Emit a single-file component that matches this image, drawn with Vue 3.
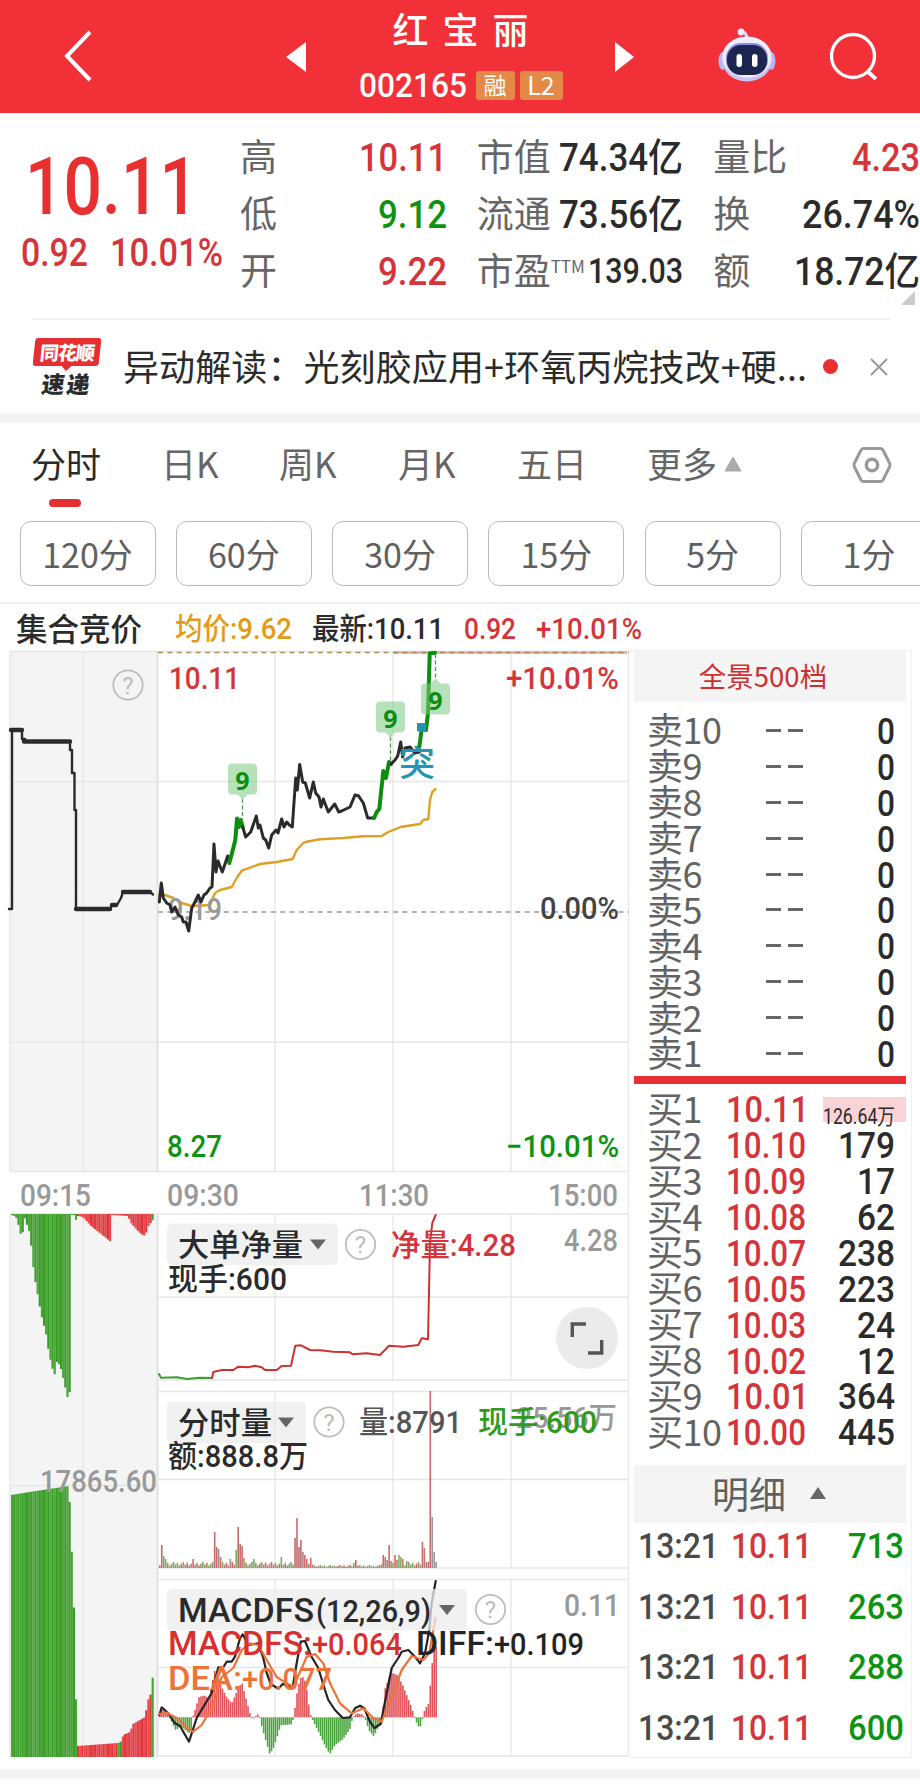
<!-- src/views/StockDetail.vue -->
<template>
  <div class="page">
    <header class="top-bar">
      <svg class="back" width="30" height="54" viewBox="0 0 30 54">
        <path d="M27 3 L4 27 L27 51" fill="none" stroke="#fff" stroke-width="4" />
      </svg>
      <svg width="20" height="30" viewBox="0 0 20 30"><path d="M0 15 L20 0 V30 Z" fill="#fff" /></svg>
      <div class="title">
        <h1>红宝丽</h1>
        <div class="code">
          <Fit t="002165" :w="108" :size="34" :weight="500" />
          <span class="badge">融</span>
          <span class="badge l2">L2</span>
        </div>
      </div>
      <svg width="20" height="30" viewBox="0 0 20 30"><path d="M19 15 L0 0 V30 Z" fill="#fff" /></svg>
      <svg class="robot" width="58" height="54" viewBox="0 0 58 54">
        <path d="M29 12 Q29 4 24 4" fill="none" stroke="#d9d3f5" stroke-width="3" />
        <circle cx="23" cy="4" r="3.4" fill="#f3efff" />
        <ellipse cx="4.5" cy="33" rx="4" ry="9" fill="#b9b4ef" />
        <ellipse cx="53.5" cy="33" rx="4" ry="9" fill="#b9b4ef" />
        <ellipse cx="29" cy="31" rx="25.5" ry="22.5" fill="#c9c3f3" />
        <ellipse cx="29" cy="29" rx="24.5" ry="20.5" fill="#f0edfd" />
        <rect x="8" y="15" width="42" height="32" rx="15" fill="#8b8de0" />
        <rect x="9" y="17" width="40" height="30" rx="14" fill="#1c2450" />
        <rect x="18.500" y="26" width="5.500" height="13" rx="2.700" fill="#fff" />
        <rect x="34" y="26" width="5.500" height="13" rx="2.700" fill="#fff" />
      </svg>
      <svg class="search" width="50" height="50" viewBox="0 0 50 50">
        <circle cx="23" cy="24" r="21.500" fill="none" stroke="#fff" stroke-width="3.300" />
        <path d="M37 39 L46 47" stroke="#fff" stroke-width="3.800" />
      </svg>
    </header>

    <section class="quote">
      <div class="price">
        <Fit t="10.11" :w="173" :size="79" :weight="500" />
        <div class="change">
          <Fit t="0.92" :w="67" :size="38" :weight="500" />
          <Fit t="10.01%" :w="113" :size="38" :weight="500" />
        </div>
      </div>
      <div v-for="(col, i) in quotes" :key="i" class="quote-col">
        <div v-for="q in col" :key="q.label" class="quote-row">
          <span class="quote-label">{{ q.label }}<sup v-if="q.sup">{{ q.sup }}</sup></span>
          <Fit :t="q.value" :w="q.w" :size="q.size || 39" :weight="500" :class="q.tone" />
        </div>
      </div>
      <i class="corner"></i>
    </section>

    <section class="news">
      <div class="news-logo">
        <span class="logo-top">同花顺</span>
        <span class="logo-bottom">速递</span>
      </div>
      <span class="news-text">异动解读：光刻胶应用+环氧丙烷技改+硬...</span>
      <i class="dot"></i>
      <svg width="18" height="18" viewBox="0 0 18 18">
        <path d="M1 1 L17 17 M17 1 L1 17" stroke="#999" stroke-width="2" />
      </svg>
    </section>

    <nav class="tabs">
      <span v-for="(tab, i) in tabs" :key="tab" class="tab" :class="{ active: i === 0 }">{{ tab }}</span>
      <svg class="more" width="18" height="16" viewBox="0 0 18 16"><path d="M9 1 L17 15 H1 Z" fill="#aaa" stroke="#aaa" stroke-linejoin="round" /></svg>
      <svg class="gear" width="40" height="38" viewBox="0 0 40 38">
        <path d="M12 2.500 H28 Q30 2.500 31 4 L37.500 17 Q38.500 19 37.500 21 L31 34 Q30 35.500 28 35.500 H12 Q10 35.500 9 34 L2.500 21 Q1.500 19 2.500 17 L9 4 Q10 2.500 12 2.500 Z" fill="none" stroke="#999" stroke-width="3" />
        <circle cx="20" cy="19" r="5.700" fill="none" stroke="#999" stroke-width="3.400" />
      </svg>
    </nav>
    <div class="periods">
      <button v-for="p in periods" :key="p">{{ p }}</button>
    </div>

    <div class="legend">
      <b>集合竞价</b>
      <Fit t="均价:9.62" :w="117" :size="30" :weight="500" class="avg" />
      <Fit t="最新:10.11" :w="132" :size="30" :weight="500" />
      <Fit t="0.92" :w="52" :size="30" :weight="500" class="up" />
      <Fit t="+10.01%" :w="106" :size="30" :weight="500" class="up" />
    </div>

    <main class="board">
      <svg class="charts" width="629" height="1108" viewBox="0 650 629 1108">
        <rect x="9.500" y="651" width="147.500" height="520" fill="#f4f4f4" />
        <rect x="9.500" y="1214" width="147.500" height="543" fill="#f4f4f4" />
        <!-- 网格线 -->
        <path :d="gridPath" fill="none" stroke="#e6e6e6" stroke-width="1.300" />
        <path d="M157.500 651 V1171 M157.500 1214 V1757" stroke="#e2e2e2" stroke-width="2" />
        <path d="M158 912 H629" stroke="#999" stroke-width="1.600" stroke-dasharray="5 4.400" />
        <path d="M393 652.500 H627" stroke="#f0b0b0" stroke-width="3" />
        <path d="M158 652.500 H629" stroke="#b29058" stroke-width="1.600" stroke-dasharray="5 4.400" />

        <!-- 集合竞价 -->
        <path d="M9 909 H12 V730 H22 V739 H25 V741.500 H70 V750 H72 V773 H74.500 V810 H76 V909 H110 L112 905 H117 L121 898 L123 892 H150 L153 894.500" class="line auction" />
        <path d="M11 730 H22 M24 741.500 H70 M76 909 H110 M123 892 H150 M112 905 H116" class="line auction-bold" />
        <rect v-for="(b, i) in auctionBars" :key="'a' + i" :x="b.x" :y="b.y" width="2.200" :height="b.h" :fill="b.fill" />

        <!-- 分时走势 -->
        <polyline :points="avgLine" class="line" stroke="#dda125" stroke-width="2.400" />
        <text x="168" y="920" textLength="54" lengthAdjust="spacingAndGlyphs" class="chart-text" font-size="31" fill="#999">9.19</text>
        <polyline v-for="(p, i) in priceLines" :key="'p' + i" :points="p.points" class="line" :stroke="p.color" :stroke-width="p.color === '#2b2b2b' ? 3 : 4" />
        <rect x="417" y="723" width="9" height="8.500" fill="#2394b4" />
        <g v-for="m in marks" :key="m.x">
          <path :d="m.dash" stroke="#4c9650" stroke-width="1.300" stroke-dasharray="4 2.500" />
          <path :d="m.tip" fill="#b5dfb7" />
          <rect :x="m.x - 14.5" :y="m.y" width="29" height="31" rx="4" fill="#7cc880" fill-opacity="0.55" />
          <text :x="m.x" :y="m.y + 26.500" text-anchor="middle" class="mark-text">9</text>
        </g>

        <!-- 大单净量 -->
        <polyline points="159,1374 161,1377.700 177,1377.300 187,1379 200,1377.700 212,1378" class="line" stroke="#3f9d32" stroke-width="2" />
        <polyline :points="netLine" class="line" stroke="#cf3030" stroke-width="2" />

        <!-- 分时量 -->
        <rect v-for="(b, i) in volumeBars" :key="'v' + i" :x="b.x" :y="1568 - b.h" width="1.600" :height="b.h" :fill="b.fill" />

        <!-- MACD -->
        <rect v-for="(b, i) in macdBars" :key="'m' + i" :x="b.x" :y="b.y" width="1.600" :height="b.h" :fill="b.fill" />
        <polyline :points="diffLine" class="line" stroke="#242424" stroke-width="2.200" />
        <polyline :points="deaLine" class="line" stroke="#ee7338" stroke-width="2.200" />

        <!-- 指标选择框 -->
        <g v-for="s in selectors" :key="s.t">
          <rect x="167" :y="s.y" :width="s.w" height="41.500" rx="5" fill="#ececec" fill-opacity="0.75" />
          <path :d="`M${s.w + 139} ${s.y + 16} h16 l-8 10 z`" fill="#666" />
        </g>

        <g v-for="c in helps" :key="c[0] + '-' + c[1]">
          <circle :cx="c[0]" :cy="c[1]" r="14.700" fill="none" stroke="#bdbdbd" stroke-width="1.800" />
          <text :x="c[0]" :y="c[1] + 8.500" text-anchor="middle" class="help-text">?</text>
        </g>
        <text
          v-for="(l, i) in labels"
          :key="'t' + i"
          :x="l[1]"
          :y="l[2]"
          :textLength="l[3]"
          :font-size="l[4]"
          :fill="l[5]"
          lengthAdjust="spacingAndGlyphs"
          class="chart-text"
        >{{ l[0] }}</text>

        <circle cx="587" cy="1338" r="31" fill="#ebebeb" />
        <path d="M572.300 1337 V1324 H586 M601.700 1340 V1353 H588" fill="none" stroke="#555" stroke-width="3.400" />
      </svg>

      <aside class="book">
        <div class="book-head">全景500档</div>
        <div class="levels sell">
          <div v-for="n in 10" :key="n" class="level">
            <span class="level-name">卖{{ 11 - n }}</span>
            <span class="dash"><i></i><i></i></span>
            <Fit t="0" :w="18" :size="36" :weight="500" />
          </div>
        </div>
        <div class="split"></div>
        <div class="levels buy">
          <div v-for="(b, i) in buys" :key="i" class="level" :class="{ first: i === 0 }">
            <span class="level-name">买{{ i + 1 }}</span>
            <Fit :t="b[0]" :w="b[0].endsWith('1') ? 83 : 80" :size="36" :weight="500" class="up buy-price" />
            <Fit :t="b[1]" :w="i ? b[1].length * 19 : 72" :size="i ? 36 : 22" :weight="i ? 500 : 400" />
          </div>
        </div>
        <div class="detail-head">
          明细
          <svg width="16" height="12" viewBox="0 0 16 12"><path d="M8 0 L16 12 H0 Z" fill="#666" /></svg>
        </div>
        <div class="details">
          <div v-for="v in trades" :key="v" class="trade">
            <Fit t="13:21" :w="81" :size="35" :weight="500" class="time" />
            <Fit t="10.11" :w="81" :size="35" :weight="500" class="up" />
            <Fit :t="v" :w="56" :size="35" :weight="500" class="down" />
          </div>
        </div>
      </aside>
    </main>
    <div class="bottom-band"></div>
  </div>
</template>

<script setup>
import { h } from 'vue'

// 窄体数字：按给定宽度压缩，盒子高度等于数字高度，方便对齐
const Fit = (props) => {
  const height = Math.round(props.size * 0.711)
  return h('svg', { class: 'fit', width: props.w, height }, [
    h('text', {
      x: 0,
      y: height,
      textLength: props.w,
      lengthAdjust: 'spacingAndGlyphs',
      'font-size': props.size,
      'font-weight': props.weight || 400,
      fill: 'currentColor'
    }, props.t)
  ])
}
Fit.props = ['t', 'w', 'size', 'weight']

const quotes = [
  [
    { label: '高', value: '10.11', w: 88, tone: 'up' },
    { label: '低', value: '9.12', w: 69, tone: 'down' },
    { label: '开', value: '9.22', w: 69, tone: 'up' }
  ],
  [
    { label: '市值', value: '74.34亿', w: 124 },
    { label: '流通', value: '73.56亿', w: 124 },
    { label: '市盈', sup: 'TTM', value: '139.03', w: 95, size: 35 }
  ],
  [
    { label: '量比', value: '4.23', w: 68, tone: 'up' },
    { label: '换', value: '26.74%', w: 118 },
    { label: '额', value: '18.72亿', w: 126 }
  ]
]
const tabs = ['分时', '日K', '周K', '月K', '五日', '更多']
const periods = ['120分', '60分', '30分', '15分', '5分', '1分']
const buys = [
  ['10.11', '126.64万'], ['10.10', '179'], ['10.09', '17'], ['10.08', '62'], ['10.07', '238'],
  ['10.05', '223'], ['10.03', '24'], ['10.02', '12'], ['10.01', '364'], ['10.00', '445']
]
const trades = ['713', '263', '288', '600']

const RED = '#d4343a'
const GREEN = '#0c9310'

const gridPath = [
  'M10 651.500 H629 M10 781.500 H629 M10 1042 H629 M10 1171.500 H629',
  'M10 651 V1171 M83 651 V1171 M275 651 V1171 M393 651 V1171 M511 651 V1171 M628.500 651 V1757',
  'M10 1214 H629 M158 1297 H629 M158 1380 H629 M158 1391.500 H629 M158 1479.500 H629 M158 1568 H629',
  'M158 1579.500 H629 M158 1667.500 H629 M158 1756 H629 M10 1485.500 H157 M10 1214 V1757 M83 1214 V1757',
  'M275 1214 V1380 M393 1214 V1380 M511 1214 V1380 M275 1391 V1568 M393 1391 V1568 M511 1391 V1568',
  'M275 1579 V1756 M393 1579 V1756 M511 1579 V1756'
].join(' ')

const priceLines = [
  { color: '#2b2b2b', points: '159.3,902 161.3,883 163.3,898 166.7,903 170,905 171.7,912 175,907 178.3,915 181.7,917 183.3,922 186,922 188.7,931 191.7,908 195,902 198.3,895 201,902 204,895 206.7,893 210,888 212,887 214,844 216,872 218,861 222.3,872 227.7,856 229.3,863' },
  { color: '#0c8f10', points: '229.3,863 233.3,848 235.3,840 237,818.5 238.7,827 240.7,820 242.7,827' },
  { color: '#2b2b2b', points: '242.7,827 245.7,837 250.7,832 256.3,816 258.3,828 260,825 263.3,838 265.7,840 268.7,848 271.7,835 276,830 278,833 281.7,819 284,827 286.7,822 289.3,825 292.3,827 295.7,778 297.3,790 299.7,764.5 302.7,782 305.3,783 309.7,798 313.3,782 315.7,793 319,797 321,807 323.3,799 328.3,812 334.7,804 338.7,812 341.7,811 350,807 355,795 358.3,795.7 363.3,803 367.7,818 374,818' },
  { color: '#0c8f10', points: '374,818 376.7,812 379.3,809 383.3,771 386,778 389,762 391,764' },
  { color: '#2b2b2b', points: '391,764 395,760 397.7,756 400.7,742 402.7,757 405,748 410,747 415,753 419.3,752' },
  { color: '#0c8f10', points: '419.3,747 421.7,729 426,730 428,713 429.7,653.5 435,652.7' }
]
const avgLine = '159.3,895 165,895 173.3,898 181.7,903 191.7,906 210,905 215,893 220,890 231.7,887 236.7,878 241.7,870.7 260,864 276.7,862 292.7,859 296.7,850 303.3,843 306.7,841.7 320,839.3 343.3,838 363.3,836.3 381.7,836 388.3,832 401.7,826.7 420,824 423.3,820 428.3,819 430,800 432.3,792 435.5,789'
const netLine = '212,1378 213.3,1372 221.7,1370 233.3,1370 238.3,1366.7 248.3,1367.3 255,1365.7 261.7,1367.3 265,1370 276.7,1370 281.7,1366 291,1365.7 295.3,1345.7 301,1345.3 310,1350 320,1350.3 333.3,1351.7 350,1352.3 352.3,1354.3 366.7,1353.3 380,1355 389,1345.7 403.3,1346.7 418.3,1345 421.7,1338.3 428,1339.3 430,1243 432.3,1223 435.7,1215'
const diffLine = '159.3,1715 161.7,1707.3 168.3,1713.3 175,1723.3 180,1726 189,1741.7 196.7,1718 211.7,1693 218.3,1667.3 223.3,1667.3 226.7,1661.7 231.7,1661.7 235,1656.7 240,1638.3 242.7,1634.3 248.3,1645 258.3,1643.3 263.3,1658 266.7,1673 270.7,1684 278.3,1688.7 282.7,1684 292.7,1687.3 296.7,1663 300.7,1641.7 305,1641 311.7,1657 318.3,1668 325,1690 328.3,1700 335,1710 342.7,1718 350,1717.3 355,1708.3 360,1705.7 364.3,1708.3 370,1721.7 374.3,1728 380.7,1724 386.7,1693 391.7,1668 398.3,1658 401.7,1651.7 408.3,1650 415,1656.7 420,1663.3 425,1653.3 429.3,1630 431.7,1603 435.7,1581'
const deaLine = '159.3,1714 166.7,1712.7 176.7,1718 186.7,1728 193.3,1731.7 201.7,1725 213.3,1705 218.3,1687 221.7,1677 233.3,1668 241.7,1650 250,1643.3 258.3,1645 266.7,1660 276.7,1677 286.7,1683.3 293.3,1686.7 300,1672 306.7,1656.7 315,1654 323.3,1663.3 330,1683.3 340,1703.3 351.7,1713.3 363.3,1708.3 373.3,1718 381.7,1721.7 391.7,1696.7 401.7,1670 411.7,1656 423.3,1660 429.3,1653 433.3,1630 435.7,1618'

const marks = [
  { x: 242.5, y: 763.5, dash: 'M242.500 799 V821', tip: 'M237.500 794.500 h10 l-5 5 z' },
  { x: 390.5, y: 701.500, dash: 'M390.500 737 V763', tip: 'M385.500 732.500 h10 l-5 5 z' },
  { x: 435.5, y: 683.500, dash: 'M435.500 654 V680', tip: 'M430.500 683.500 h10 l-5 -5 z' }
]
const selectors = [
  { t: '大单净量', y: 1223.5, w: 171 },
  { t: '分时量', y: 1401.5, w: 139 },
  { t: 'MACDFS', y: 1589, w: 300 }
]
const helps = [[128, 685], [360.5, 1244.5], [329, 1422], [490.5, 1609.5]]

// 文本, x, y, 宽度, 字号, 颜色
const labels = [
  ['10.11', 169, 689, 71, 32, RED],
  ['+10.01%', 506, 689, 113, 31, RED],
  ['0.00%', 540, 919, 79, 31, '#444'],
  ['8.27', 167, 1157, 55, 31, GREEN],
  ['−10.01%', 506, 1157, 113, 31, GREEN],
  ['突', 399, 776, 36, 35, '#2394b4'],
  ['09:15', 20, 1206, 71, 31, '#999'],
  ['09:30', 167, 1206, 72, 31, '#999'],
  ['11:30', 359, 1206, 70, 31, '#999'],
  ['15:00', 548, 1206, 70, 31, '#999'],
  ['大单净量', 178, 1256, 125, 31, '#2b2b2b'],
  ['净量:4.28', 391, 1256, 125, 31, RED],
  ['4.28', 564, 1251, 54, 31, '#999'],
  ['现手:600', 168, 1290, 119, 31, '#2b2b2b'],
  ['分时量', 178, 1434, 94, 31, '#2b2b2b'],
  ['25.56万', 516, 1428, 101, 30, '#999'],
  ['量:8791', 359, 1433, 103, 31, '#555'],
  ['现手:600', 478, 1433, 119, 31, '#2f9a1c'],
  ['额:888.8万', 168, 1467, 140, 31, '#2b2b2b'],
  ['17865.60', 40, 1492, 117, 31, '#999'],
  ['MACDFS', 178, 1622, 136, 33, '#2b2b2b'],
  ['(12,26,9)', 316, 1622, 115, 31, '#2b2b2b'],
  ['0.11', 564, 1616, 56, 31, '#999'],
  ['MACDFS:', 168, 1655, 144, 33, '#d9302f'],
  ['+0.064', 312, 1655, 90, 31, '#d9302f'],
  ['DIFF:', 416, 1655, 78, 33, '#242424'],
  ['+0.109', 494, 1655, 90, 31, '#242424'],
  ['DEA:', 168, 1690, 74, 33, '#ee7338'],
  ['+0.077', 242, 1690, 90, 31, '#ee7338']
]

// 在关键点之间线性插值
function envelope(points, x) {
  for (let i = 1; i < points.length; i++) {
    const [x0, y0] = points[i - 1]
    const [x1, y1] = points[i]
    if (x <= x1) return y0 + ((y1 - y0) * (x - x0)) / (x1 - x0 || 1)
  }
  return points[points.length - 1][1]
}

const macdShape = [
  [159, 3], [162, 10], [168, 3], [169, -1], [175, -13], [180, -9], [190, -17], [191.5, 0], [193, 3], [198, 20], [203, 22],
  [208, 19], [211, 33], [214, 47], [218, 38], [220, 32], [226, 20], [231, 14], [237, 28], [241, 35], [247, 12], [250, 1],
  [252, -1], [257, 3], [259, -1], [262, -13], [269, -37], [273, -30], [280, -8], [291, -7], [293, 0], [297, 30], [301, 42],
  [305, 35], [309, 5], [311, -1], [318, -15], [324, -28], [329, -37], [334, -28], [342, -22], [349, -12], [352, 0], [356, 4],
  [362, 3], [365, -3], [368, -13], [373, -19], [380, -5], [382, 0], [383, 25], [390, 45], [397, 42], [402, 32], [410, 12],
  [414, 0], [417, -9], [420, -9], [422, 0], [424, 8], [428, 14], [430, 38], [433, 72], [436, 70]
]
const macdBars = Array.from({ length: 142 }, (_, i) => {
  const x = 159 + i * 1.96
  const v = envelope(macdShape, x)
  return { x, y: v > 0 ? 1717.3 - v : 1717.3, h: Math.max(1, Math.abs(v)), fill: v > 0 ? '#e05358' : '#4ba53e' }
})

const peaks = {
  1: 23, 2: 12, 3: 9, 17: 9, 28: 36, 29: 21, 30: 19, 31: 11, 36: 9, 39: 18, 40: 41, 41: 24, 42: 22, 43: 10, 48: 9,
  62: 11, 69: 30, 70: 50, 71: 21, 72: 28, 73: 16, 74: 13, 75: 9, 77: 10, 99: 5, 100: 8, 114: 13, 115: 11, 116: 8, 117: 23, 118: 7,
  120: 13, 121: 8, 122: 13, 123: 11, 124: 9, 126: 7, 134: 26, 135: 20, 136: 6, 138: 177, 139: 51, 140: 16, 141: 6
}
const volumeColors = ['#dc6468', '#6cb45c', '#999088', '#c97870', '#8aa862']
const volumeBars = Array.from({ length: 142 }, (_, i) => {
  const calm = i > 78 && i < 113 ? 1.3 : 2.6
  const hgt = peaks[i] || calm + ((i * 7) % 5) * (calm / 3)
  let fill = hgt > 20 ? '#c56a6a' : volumeColors[(i * 3 + (i >> 2)) % 5]
  if (i > 138) fill = '#999'
  return { x: 159 + i * 1.96, h: hgt, fill }
})

const netShape = [
  [10, 1], [14, 2], [16, 5], [21, 26], [23, 2], [25, 8], [29, 20], [33, 60], [36, 77], [40, 100], [45, 120], [48, 140],
  [52, 157], [54, 161], [56, 146], [60, 155], [64, 172], [66, 184], [69, 177], [70, 1], [73, 1], [75, 6], [77, 2], [82, 3],
  [90, 12], [100, 20], [110, 28], [111, 1], [127, 2], [130, 9], [135, 15], [140, 20], [144, 22], [148, 10], [151, 8], [153, 2]
]
const unmatchedShape = [
  [10, 262], [35, 266], [68, 271], [69.5, 224], [72, 183], [74, 96], [76, 11], [117, 14], [121, 16], [122, 22], [129, 25],
  [132, 33], [144, 40], [147, 57], [151, 66], [152, 89], [155, 89]
]
const auctionBars = []
for (let x = 11; x < 153; x += 2.13) {
  const down = envelope(netShape, x)
  auctionBars.push({ x, y: 1214, h: down, fill: stripe(x, x < 76 || x > 151) })
  const up = envelope(unmatchedShape, x)
  auctionBars.push({ x, y: 1757 - up, h: up, fill: stripe(x, x < 75 || x > 151 || (x > 117 && x < 121)) })
}
function stripe(x, green) {
  const odd = Math.round(x / 2.13) % 2
  if (green) return odd ? '#48a832' : '#3b9a2c'
  return odd ? '#ee474b' : '#d9393e'
}
</script>

<style>
body {
  background: #fff;
}

.fit {
  display: block;
  flex: none;
  overflow: visible;
  font-family: Roboto, 'Noto Sans CJK SC', sans-serif;
}
</style>

<style scoped>
.page {
  width: 920px;
  height: 1792px;
  overflow: hidden;
  background: #fff;
  color: #2b2b2b;
  font-family: 'Noto Sans CJK SC', sans-serif;
}

.up {
  color: #d4343a;
}

.down {
  color: #0c9310;
}

.top-bar {
  display: grid;
  grid-template-columns: 286px 20px 309px 20px 141px 104px;
  align-items: center;
  height: 113px;
  background: #f23038;
  color: #fff;
}

.back {
  margin-left: 63px;
  margin-bottom: 2px;
}

.robot {
  justify-self: end;
  margin-bottom: 4px;
}

.search {
  justify-self: end;
}

.title {
  display: flex;
  flex-direction: column;
  align-items: center;
}

.title h1 {
  margin: -5px 0 0 14px;
  font-size: 36px;
  line-height: 52px;
  font-weight: 500;
  letter-spacing: 14px;
}

.code {
  display: flex;
  align-items: center;
  height: 42px;
  margin-top: 10px;
}

.badge {
  width: 39px;
  height: 29px;
  margin-left: 9px;
  border-radius: 3px;
  background: #e48a48;
  font-size: 23px;
  line-height: 27px;
  text-align: center;
}

.badge.l2 {
  width: 43px;
  margin-left: 5px;
  font-size: 25px;
}

.quote {
  position: relative;
  display: flex;
  gap: 30px;
  height: 191px;
  padding-top: 14px;
}

.price {
  width: 210px;
  padding-top: 31px;
  color: #e93030;
}

.price > svg {
  margin-left: 25px;
}

.change {
  display: flex;
  gap: 22px;
  margin: 25px 0 0 21px;
  color: #d4343a;
}

.quote-col {
  width: 207px;
}

.quote-row {
  display: flex;
  align-items: center;
  justify-content: space-between;
  height: 57px;
}

.quote-row > svg {
  margin-top: 2px;
}

.quote-label {
  color: #666;
  font-size: 37px;
  line-height: 57px;
  white-space: nowrap;
}

.quote-label sup {
  font-size: 17px;
  line-height: 0;
  vertical-align: 12px;
}

.corner {
  position: absolute;
  right: 5px;
  bottom: 13px;
  border-left: 14px solid transparent;
  border-bottom: 14px solid #ccc;
}

.news {
  display: flex;
  align-items: center;
  height: 93px;
  margin: 0 29px 0 32px;
  border-top: 2px solid #f2f2f2;
}

.news-logo {
  display: flex;
  flex-direction: column;
  align-items: center;
  width: 70px;
}

.logo-top {
  width: 66px;
  height: 28px;
  border-radius: 3px;
  background: #e62f33;
  color: #fff;
  font-size: 19px;
  font-weight: 900;
  line-height: 27px;
  letter-spacing: -1px;
  text-align: center;
  transform: skewX(-6deg);
}

.logo-top::after {
  content: '';
  position: absolute;
  left: 29px;
  top: 28px;
  border: 5px solid transparent;
  border-top-color: #e62f33;
  border-bottom: 0;
}

.logo-bottom {
  margin-top: 4px;
  font-size: 23px;
  font-weight: 900;
  line-height: 26px;
  letter-spacing: 2px;
  transform: skewX(-8deg);
}

.news-text {
  width: 699px;
  padding: 0 0 4px 21px;
  font-size: 36px;
  line-height: 50px;
  letter-spacing: 0.1px;
  white-space: nowrap;
  box-sizing: border-box;
}

.dot {
  width: 15px;
  height: 15px;
  margin: 0 32px 0 22px;
  border-radius: 50%;
  background: #e93030;
}

.tabs {
  display: flex;
  height: 98px;
  padding-left: 31px;
  border-top: 10px solid #f4f4f4;
}

.tab {
  position: relative;
  width: 119px;
  padding-left: 12px;
  color: #666;
  font-size: 35px;
  line-height: 80px;
  box-sizing: border-box;
  white-space: nowrap;
}

.tab:nth-child(1) {
  width: 118px;
  padding-left: 0;
}

.tab:nth-child(n + 3) {
  left: -1px;
}

.tab:nth-child(6) {
  width: 89px;
  padding-left: 23px;
}

.tab.active {
  color: #2b2b2b;
}

.tab.active::after {
  content: '';
  position: absolute;
  left: 18px;
  bottom: 14px;
  width: 32px;
  height: 8px;
  border-radius: 4px;
  background: #e62f33;
}

.more {
  margin: 33px 0 0 10px;
}

.gear {
  margin: 23px 0 0 110px;
}

.periods {
  display: flex;
  gap: 20.3px;
  height: 81px;
  padding-left: 19.5px;
  overflow: hidden;
  border-bottom: 2px solid #f0f0f0;
}

.periods button {
  flex: none;
  width: 136px;
  height: 65px;
  padding: 0;
  border: 1.5px solid #bbb;
  border-radius: 11px;
  background: #fff;
  color: #606060;
  font-family: inherit;
  font-size: 34px;
  line-height: 60px;
}

.legend {
  display: flex;
  align-items: center;
  height: 46px;
  padding: 2px 0 0 16px;
  box-sizing: border-box;
}

.legend b {
  width: 159px;
  padding-bottom: 2px;
  font-size: 31.5px;
  line-height: 42px;
  font-weight: 500;
}

.legend svg {
  margin-right: 20px;
}

.legend .avg {
  color: #e39b17;
}

.board {
  display: flex;
  height: 1108px;
}

.charts {
  display: block;
  flex: none;
}

.line {
  fill: none;
  stroke-linejoin: round;
  stroke-linecap: round;
}

.auction {
  stroke: #2b2b2b;
  stroke-width: 2.4;
}

.auction-bold {
  stroke: #2b2b2b;
  stroke-width: 4.4;
}

.chart-text {
  font-family: Roboto, 'Noto Sans CJK SC', sans-serif;
  font-weight: 500;
}

.mark-text {
  font: 700 25px 'Open Sans', sans-serif;
  fill: #0c8f10;
}

.help-text {
  font: 400 24px Roboto, sans-serif;
  fill: #bdbdbd;
}

.book {
  width: 283px;
  padding: 0 5px;
  border: 1.5px solid #efefef;
  border-left: 0;
  box-sizing: border-box;
}

.book-head {
  height: 51px;
  margin-bottom: 10.5px;
  padding-right: 14px;
  background: #f4f4f4;
  color: #cc3030;
  font-size: 27.5px;
  line-height: 48px;
  text-align: center;
}

.level {
  display: grid;
  grid-template-columns: 79px 80px 1fr;
  align-items: center;
  height: 35.9px;
  padding: 0 11px 0 13px;
}

.level > svg {
  margin-top: 1px;
}

.level > svg:last-child {
  justify-self: end;
}

.level-name {
  margin-top: -3px;
  color: #636363;
  font-size: 36px;
  line-height: 35px;
  letter-spacing: -0.5px;
  white-space: nowrap;
}

.dash {
  display: flex;
  gap: 7px;
  justify-content: flex-end;
  margin-right: 3px;
}

.dash i {
  width: 15px;
  height: 3px;
  background: #666;
}

.split {
  height: 8px;
  margin: 4.5px 0 7px;
  background: #e62f33;
}

.level.first {
  background: linear-gradient(#f9d3d5, #f9d3d5) 189px 6px / 84px 25px no-repeat;
}

.level.first > svg:last-child {
  margin-top: 14px;
}

.detail-head {
  display: flex;
  align-items: center;
  justify-content: center;
  gap: 24px;
  height: 58px;
  margin-top: 15px;
  padding: 0 2px 2px 0;
  background: #f4f4f4;
  color: #606060;
  font-size: 37px;
  line-height: 54px;
  box-sizing: border-box;
}

.details {
  padding-top: 1px;
}

.trade {
  display: grid;
  grid-template-columns: 93px 80px 1fr;
  align-items: center;
  height: 44px;
  margin-bottom: 16.5px;
  padding: 0 2px 0 4px;
}

.trade > svg:last-child {
  justify-self: end;
}

.time {
  color: #4a4a4a;
}

.bottom-band {
  height: 10px;
  margin-top: 11px;
  background: #f4f4f4;
}
</style>
